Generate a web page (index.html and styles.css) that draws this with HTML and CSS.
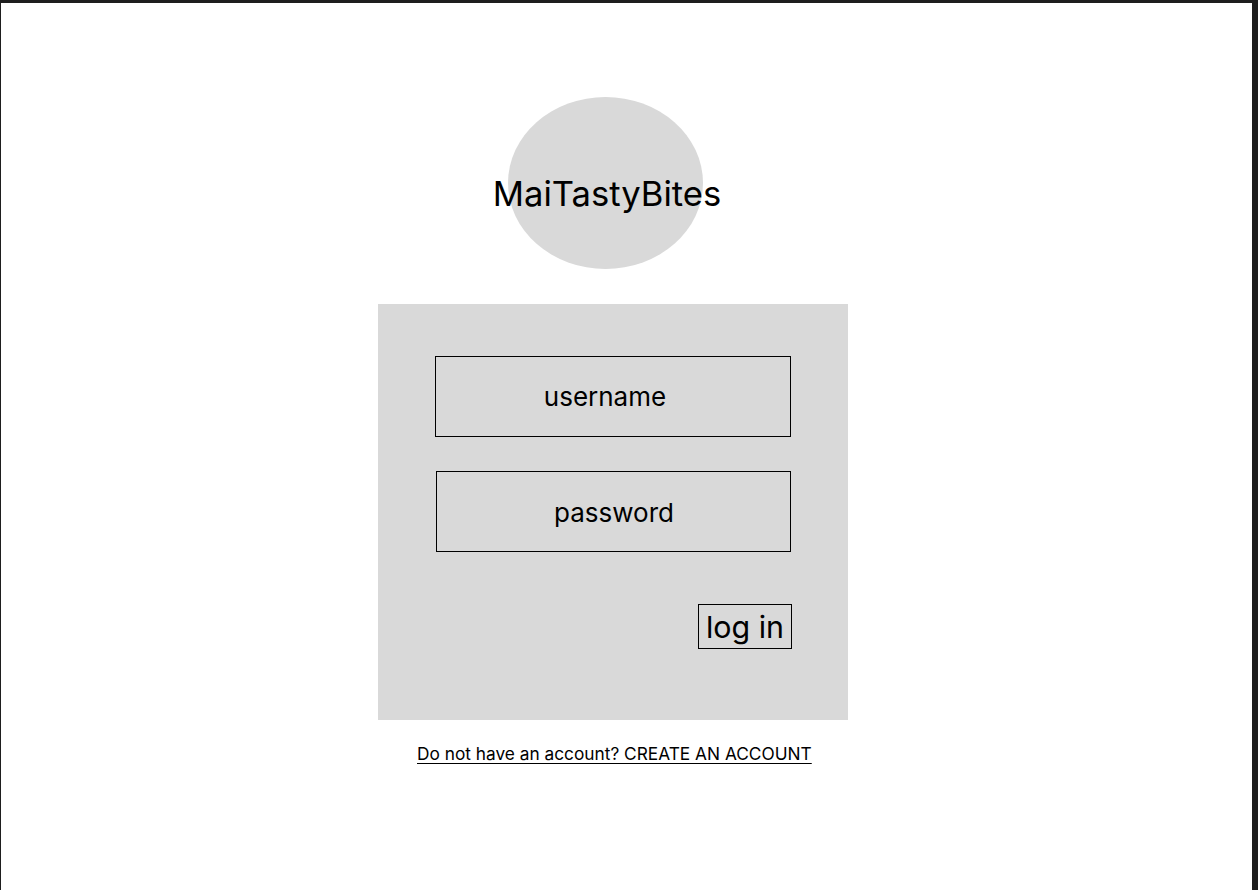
FILE: index.html
```html
<!DOCTYPE html>
<html>
<head>
<meta charset="utf-8">
<link rel="stylesheet" href="styles.css">
</head>
<body>
<div class="frame">
  <div class="logo"><span class="logo-text">MaiTastyBites</span></div>
  <form class="card">
    <div class="field field-first">username</div>
    <div class="field field-second">password</div>
    <div class="actions"><button type="button" class="login">log in</button></div>
  </form>
  <a class="signup" href="#">Do not have an account? CREATE AN ACCOUNT</a>
</div>
</body>
</html>
```
FILE: styles.css
```css
html, body {
  margin: 0;
  padding: 0;
}
body {
  font-family: Inter, "Noto Sans", sans-serif;
  color: #000;
  background: #1e1e1e;
}
.frame {
  box-sizing: border-box;
  width: 1258px;
  height: 890px;
  background: #fff;
  border-top: 3px solid #1e1e1e;
  border-left: 1px solid #1e1e1e;
  border-right: 6px solid #1e1e1e;
  display: flex;
  flex-direction: column;
  align-items: flex-start;
}
.logo {
  margin-top: 94px;
  margin-left: 507px;
  width: 195px;
  height: 172px;
  border-radius: 50%;
  background: #d9d9d9;
  display: flex;
  justify-content: center;
  align-items: center;
}
.logo-text {
  white-space: nowrap;
  font-size: 34.6px;
  line-height: 1;
  padding-left: 3px;
  padding-top: 20px;
}
.card {
  box-sizing: border-box;
  margin: 35px 0 0 377px;
  width: 470px;
  height: 416px;
  background: #d9d9d9;
  padding: 52px 56px 0 57px;
  display: flex;
  flex-direction: column;
}
.field {
  box-sizing: border-box;
  height: 81px;
  width: 356px;
  border: 1px solid #000;
  display: flex;
  align-items: center;
  justify-content: center;
  font-size: 26px;
}
.field-first {
  padding-right: 16px;
}
.field-second {
  margin-top: 34px;
  margin-left: 1px;
  width: 355px;
  padding-left: 1px;
  padding-top: 2px;
}
.actions {
  margin-top: 52px;
  display: flex;
  justify-content: flex-end;
}
.login {
  box-sizing: border-box;
  width: 94px;
  height: 45px;
  border: 1px solid #000;
  background: transparent;
  padding: 2px 0 0;
  font-family: Inter, "Noto Sans", sans-serif;
  font-size: 30.4px;
  line-height: 1;
  color: #000;
}
.signup {
  margin: 23px 0 0 416px;
  color: #000;
  font-size: 17.3px;
  text-decoration: underline;
  text-underline-offset: 3px;
}
```
